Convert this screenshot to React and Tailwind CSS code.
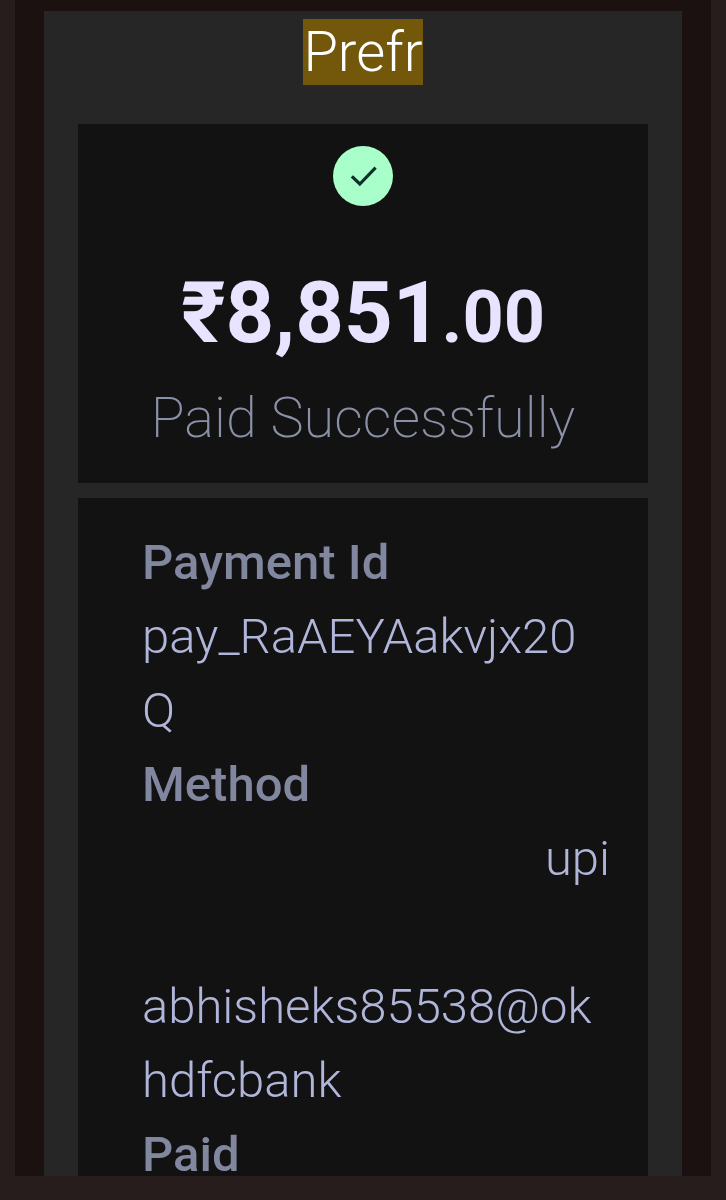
import React from 'react';

const payment = {
  merchant: 'Prefr',
  amount: '₹8,851',
  paise: '.00',
  id: 'pay_RaAEYAakvjx20Q',
  method: 'upi',
  vpa: 'abhisheks85538@okhdfcbank',
};

function SuccessBadge() {
  return (
    <svg viewBox="0 0 60 60" className="mx-auto block size-[60px]" role="img" aria-label="Success">
      <circle cx="30" cy="30" r="30" fill="#a9ffc9" />
      <path d="M20 31.5L26.8 38L41.5 22.8" fill="none" stroke="#10312b" strokeWidth="3.2" strokeLinecap="square" />
    </svg>
  );
}

function AmountPanel() {
  return (
    <section className="bg-[#121212] pt-[22px] pb-8 text-center">
      <SuccessBadge />
      <p className="mt-[57px] text-[85px] leading-[100px] font-bold text-[#e8e4ff]">
        {payment.amount}
        <span className="text-[72px] leading-none">{payment.paise}</span>
      </p>
      <p className="mt-[22px] text-[56px] leading-[66px] font-extralight text-[#8a90a6]">Paid Successfully</p>
    </section>
  );
}

function DetailsPanel() {
  return (
    <dl className="mt-[15px] flex-1 bg-[#121212] pt-7 pr-[38px] pl-16 text-[49px] leading-[74px] font-light break-all text-[#b0b5da]">
      <dt className="font-medium text-[#81879e]">Payment Id</dt>
      <dd className="pr-2">{payment.id}</dd>
      <dt className="font-medium text-[#81879e]">Method</dt>
      <dd className="text-right">{payment.method}</dd>
      <dd className="mt-[74px] pr-2">{payment.vpa}</dd>
      <dt className="font-medium text-[#81879e]">Paid</dt>
    </dl>
  );
}

export default function App() {
  return (
    <div className="h-screen bg-[#271d1c] px-[15px] pb-6 font-['Roboto',sans-serif]">
      {/* receipt scrolls out under the bottom edge */}
      <div className="h-full overflow-hidden bg-[#1b1110] px-[29px] pt-[11px]">
        <main className="flex min-h-full flex-col bg-[#262626] px-[34px]">
          <h1 className="mb-[31px] text-center text-[56px] leading-[82px] font-light text-white">
            <mark className="bg-[#73580b] text-white">{payment.merchant}</mark>
          </h1>
          <AmountPanel />
          <DetailsPanel />
        </main>
      </div>
    </div>
  );
}
